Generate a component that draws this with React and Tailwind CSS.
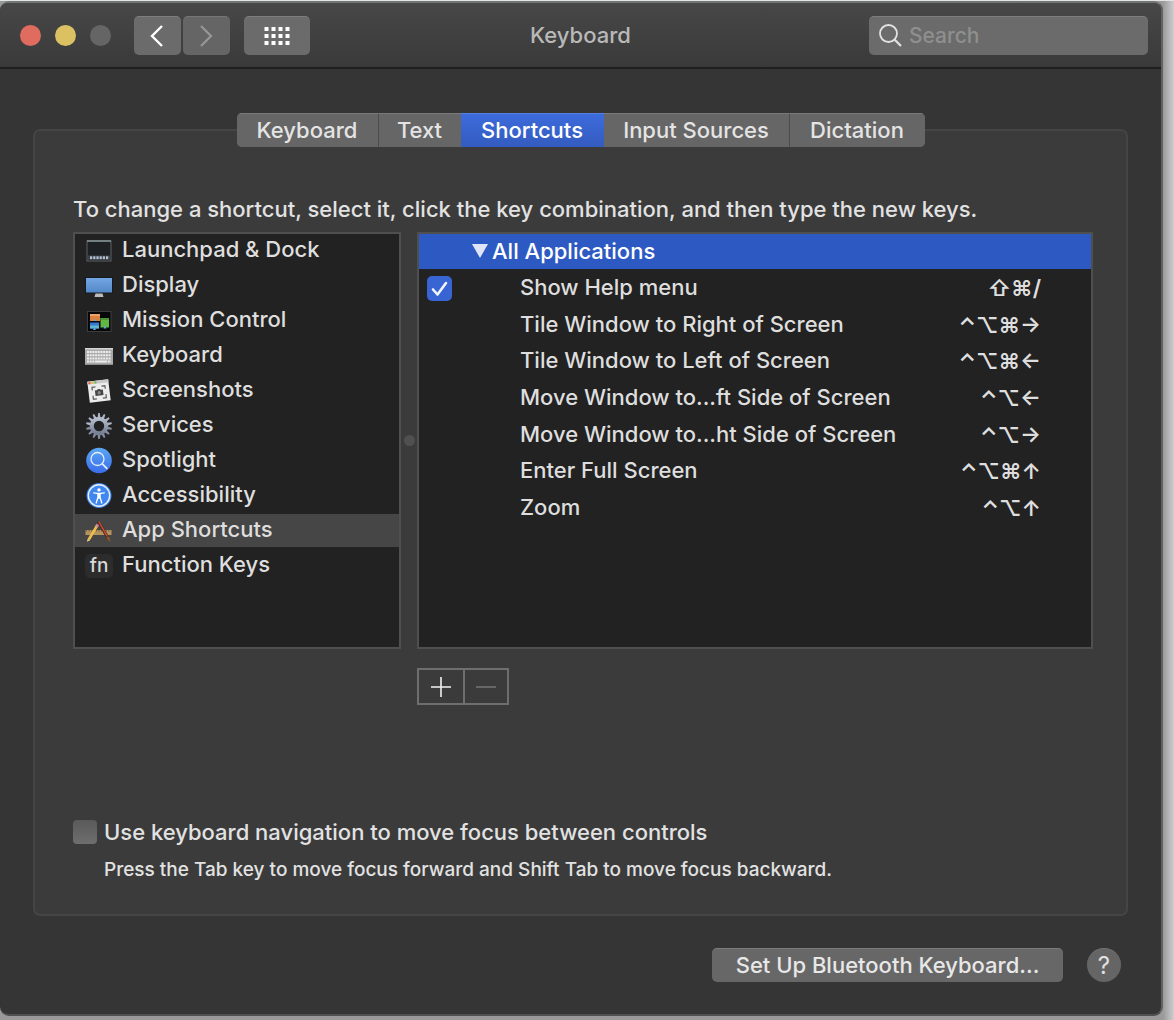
import { useState } from "react";

function LaunchpadIcon() {
  return (
    <svg width="28" height="28" viewBox="0 0 28 28" aria-hidden="true">
      <rect x="2" y="4" width="24" height="20" fill="#1d2124" stroke="#5d6265" strokeWidth="1" />
      <path d="M2 4h24" stroke="#a9bcc2" strokeWidth="1.200" />
      <rect x="3" y="18.500" width="22" height="4.500" fill="#3a4248" />
      {[5, 8.2, 11.400, 14.600, 17.800, 21].map((x) => (
        <rect key={x} x={x} y="19.300" width="2.200" height="2.800" fill="#b4bfd2" />
      ))}
    </svg>
  );
}

function DisplayIcon() {
  return (
    <svg width="28" height="28" viewBox="0 0 28 28" aria-hidden="true">
      <defs>
        <linearGradient id="display" x1="0" y1="0" x2="0" y2="1">
          <stop offset="0" stopColor="#74a7e4" />
          <stop offset="1" stopColor="#5288c8" />
        </linearGradient>
      </defs>
      <rect x="0.500" y="5.500" width="27" height="15.500" fill="url(#display)" stroke="#16191d" />
      <path d="M10.500 21.500h7l1 3.500h-9z" fill="#b9bbbd" />
    </svg>
  );
}

function MissionIcon() {
  return (
    <svg width="28" height="28" viewBox="0 0 28 28" aria-hidden="true">
      <rect x="2.500" y="4.500" width="23.500" height="20" fill="#050607" stroke="#3a3c3e" />
      <rect x="5" y="7" width="10" height="7" fill="#db8240" />
      <path d="M5 7h10v2H5z" fill="#eda36a" />
      <rect x="5" y="15.500" width="9" height="6" fill="#3479d4" />
      <path d="M5 18.500h9v3H5z" fill="#61b5ce" />
      <rect x="15.500" y="11" width="8.500" height="9.500" fill="#5fb644" />
      <path d="M15.500 11H24v2h-8.500z" fill="#4a9636" />
      <path d="M8.500 14h3l-1.500-2zM8 23h3l-1.500-3zM18.500 21.500h3l-1.500-3z" fill="#56a9ec" />
    </svg>
  );
}

function KeyboardIcon() {
  return (
    <svg width="28" height="28" viewBox="0 0 28 28" aria-hidden="true">
      <rect x="0" y="6" width="28" height="17" rx="1" fill="#a9a9a9" />
      <rect x="0" y="6" width="28" height="1.500" fill="#d4d4d4" />
      <path d="M2 10h24M2 13.200h24M2 16.400h24" stroke="#ededed" strokeWidth="2" strokeDasharray="2 0.700" />
      <path d="M2 19.600h24" stroke="#ededed" strokeWidth="2" strokeDasharray="2 0.700 2 0.700 2 0.700 12 0.700 2 0.700" />
      <path d="M0 22.500h28" stroke="#8b8b8b" />
    </svg>
  );
}

function ScreenshotIcon() {
  return (
    <svg width="28" height="28" viewBox="0 0 28 28" aria-hidden="true">
      <g transform="rotate(-7 14 14)">
        <rect x="3.500" y="3.500" width="21" height="21" fill="#ececec" />
        <rect x="3.500" y="3.500" width="21" height="3" fill="#c9c9c9" />
        <circle cx="5.500" cy="5" r="1.200" fill="#ee5c52" />
        <circle cx="8.500" cy="5" r="1.200" fill="#e5bd43" />
        <circle cx="11.500" cy="5" r="1.200" fill="#63bd52" />
        <path d="M7.500 12.500v-3h3.500M17 9.500h3.500v3M20.500 18v3.500H17M11 21.500H7.500V18" fill="none" stroke="#666" strokeWidth="1.300" />
        <path d="M10 13h2l1-1h2l1 1h2v5.500h-8z" fill="#444" />
        <circle cx="14" cy="15.700" r="1.700" fill="#888" />
      </g>
    </svg>
  );
}

function GearIcon() {
  return (
    <svg width="28" height="28" viewBox="0 0 28 28" aria-hidden="true">
      <defs>
        <linearGradient id="gear" x1="0" y1="0" x2="0" y2="1">
          <stop offset="0" stopColor="#b4bbcb" />
          <stop offset="1" stopColor="#757e94" />
        </linearGradient>
      </defs>
      {Array.from({ length: 14 }, (_, i) => (
        <path key={i} d="M12.500 6 13.200 1h1.600l.7 5z" fill={i > 3 && i < 11 ? "#858da1" : "#adb4c5"} transform={`rotate(${(i * 360) / 14} 14 14)`} />
      ))}
      <circle cx="14" cy="14" r="7.200" fill="none" stroke="url(#gear)" strokeWidth="4" />
    </svg>
  );
}

function SpotlightIcon() {
  return (
    <svg width="28" height="28" viewBox="0 0 28 28" aria-hidden="true">
      <defs>
        <linearGradient id="spot" x1="0" y1="0" x2="0" y2="1">
          <stop offset="0" stopColor="#5aa7f3" />
          <stop offset="1" stopColor="#3b6ceb" />
        </linearGradient>
      </defs>
      <circle cx="14" cy="13.500" r="12.800" fill="url(#spot)" />
      <circle cx="12.500" cy="12" r="6.500" fill="none" stroke="#e4effc" strokeWidth="1.300" />
      <path d="m17.300 16.800 4.500 4.500" stroke="#e4effc" strokeWidth="1.800" strokeLinecap="round" />
    </svg>
  );
}

function AccessibilityIcon() {
  return (
    <svg width="28" height="28" viewBox="0 0 28 28" aria-hidden="true">
      <g transform="translate(0 -0.500)">
        <circle cx="14" cy="14" r="12.500" fill="#3f83ec" />
        <circle cx="14" cy="14" r="10.700" fill="#4087ef" stroke="#e6f0fd" strokeWidth="1.400" />
        <circle cx="14" cy="8.400" r="1.700" fill="#fff" />
        <path d="M8.700 11.400 12.400 11.800h3.200l3.700-.4M12.900 12v4l-1.700 5.500M15.100 12v4l1.700 5.500M14 11.800v5" fill="none" stroke="#fff" strokeWidth="1.300" strokeLinecap="round" strokeLinejoin="round" />
      </g>
    </svg>
  );
}

function AppsIcon() {
  return (
    <svg width="28" height="28" viewBox="0 0 28 28" aria-hidden="true">
      <rect x="0.500" y="13" width="26" height="5" fill="#b3935f" />
      <path d="M1 13.800h25" stroke="#7b6340" strokeWidth="1.500" strokeDasharray="1 1.500" />
      <path d="M13.500 4.500 23.500 22" stroke="#3e2a23" strokeWidth="3" />
      <path d="M13.800 4.500 22 19" stroke="#bf4b31" strokeWidth="1.600" />
      <path d="m21.800 19 3 1.500.7 4.500-4-3.500z" fill="#8a5331" />
      <path d="M12.500 8 3.500 23" stroke="#edbd4b" strokeWidth="2.600" />
      <path d="m12.800 7.400-1.400 2.300" stroke="#d985a4" strokeWidth="2.800" />
      <path d="m2.400 22.300-.4 2.500 2.500-1.200z" fill="#e8d5b5" />
    </svg>
  );
}

function FnIcon() {
  return (
    <span aria-hidden="true" className="grid h-6 w-7 place-items-center rounded-[5px] bg-[#2c2c2c] text-[19px] leading-6 text-[#d8d8d8]">
      fn
    </span>
  );
}

const CATEGORIES = [
  ["Launchpad & Dock", LaunchpadIcon],
  ["Display", DisplayIcon],
  ["Mission Control", MissionIcon],
  ["Keyboard", KeyboardIcon],
  ["Screenshots", ScreenshotIcon],
  ["Services", GearIcon],
  ["Spotlight", SpotlightIcon],
  ["Accessibility", AccessibilityIcon],
  ["App Shortcuts", AppsIcon],
  ["Function Keys", FnIcon],
];

const SHORTCUTS = [
  ["Show Help menu", "⇧⌘/"],
  ["Tile Window to Right of Screen", "⌃⌥⌘→"],
  ["Tile Window to Left of Screen", "⌃⌥⌘←"],
  ["Move Window to...ft Side of Screen", "⌃⌥←"],
  ["Move Window to...ht Side of Screen", "⌃⌥→"],
  ["Enter Full Screen", "⌃⌥⌘↑"],
  ["Zoom", "⌃⌥↑"],
];

const TABS = ["Keyboard", "Text", "Shortcuts", "Input Sources", "Dictation"];

function TitleBar() {
  return (
    <header className="grid h-[66px] grid-cols-[1fr_auto_1fr] items-center border-b-2 border-[#1f1f1f] bg-linear-to-b from-[#474747] to-[#3a3a3a] px-[13px]">
      <div className="flex items-center pl-[7px]">
        <div className="flex gap-[14px]">
          <button aria-label="Close" className="size-[21px] rounded-full bg-[#e06c60]" />
          <button aria-label="Minimize" className="size-[21px] rounded-full bg-[#dcc162]" />
          <button aria-label="Full screen" disabled className="size-[21px] rounded-full bg-[#656565]" />
        </div>
        <div className="ml-[23px] flex gap-[2px]">
          <button aria-label="Back" className="grid h-[39px] w-[47px] place-items-center rounded-[5px] border-t border-[#7e7e7e] bg-[#6b6b6b]">
            <svg width="16" height="24" viewBox="0 0 16 24" fill="none" stroke="#fff" strokeWidth="2.400">
              <path d="M12 2 2 12l10 10" />
            </svg>
          </button>
          <button aria-label="Forward" disabled className="grid h-[39px] w-[47px] place-items-center rounded-[5px] border-t border-[#757575] bg-[#656565]">
            <svg width="16" height="24" viewBox="0 0 16 24" fill="none" stroke="#979797" strokeWidth="2.200">
              <path d="M2 2 12 12 2 22" />
            </svg>
          </button>
        </div>
        <button aria-label="Show all" className="ml-[14px] grid h-[39px] w-[66px] place-items-center rounded-[5px] border-t border-[#7e7e7e] bg-[#6b6b6b]">
          <svg width="26" height="20" viewBox="0 0 26 20" fill="#fff">
            {[0, 1, 2].map((r) => [0, 1, 2, 3].map((c) => <rect key={`${r}${c}`} x={c * 7 + 0.500} y={r * 7 + 1} width="4" height="4" />))}
          </svg>
        </button>
      </div>
      <h1 className="text-[22px] leading-7 font-medium text-[#b9b9b9]">Keyboard</h1>
      <label className="flex h-[39px] w-[279px] items-center gap-[7px] justify-self-end rounded-[5px] border-t border-[#7e7e7e] bg-[#6b6b6b] pl-[10px]">
        <svg className="shrink-0" width="23" height="23" viewBox="0 0 23 23" fill="none" stroke="#e2e2e2" strokeWidth="1.800" aria-hidden="true">
          <circle cx="9.500" cy="9.500" r="8.500" />
          <path d="m15.500 15.500 6.500 6.500" strokeWidth="2.200" />
        </svg>
        <input type="search" aria-label="Search" placeholder="Search" className="w-full min-w-0 bg-transparent text-[21px] leading-7 text-white outline-none placeholder:text-[#8f8f8f]" />
      </label>
    </header>
  );
}

function Tabs({ tab, setTab }) {
  return (
    <div role="tablist" className="relative mx-auto -mb-[18px] grid h-[34px] w-[688px] grid-cols-[142fr_82fr_143fr_186fr_135fr] overflow-hidden rounded-[5px] bg-[#666]">
      {TABS.map((t, i) => (
        <button
          key={t}
          role="tab"
          aria-selected={t === tab}
          onClick={() => setTab(t)}
          className={`border-t pb-px text-[22px] leading-7 ${
            t === tab ? "border-[#557fe0] bg-linear-to-b from-[#3c6bdb] to-[#345cc0] text-white" : "border-[#7a7a7a] bg-[#666] text-[#e4e4e4]"
          } ${i === 0 || i === 3 ? "border-r border-r-[#4c4c4c]" : ""}`}
        >
          {t}
        </button>
      ))}
    </div>
  );
}

function CategoryList({ selected, onSelect }) {
  return (
    <ul className="flex w-[328px] shrink-0 flex-col gap-[2px] border-2 border-[#4f4f4f] bg-[#222]">
      {CATEGORIES.map(([name, Icon]) => (
        <li key={name}>
          <button
            onClick={() => onSelect(name)}
            className={`flex h-[33px] w-full items-center gap-[9px] pl-[10px] text-left text-[22px] leading-7 text-[#dedede] ${name === selected ? "bg-[#464646]" : ""}`}
          >
            <Icon />
            <span className="pb-[3px]">{name}</span>
          </button>
        </li>
      ))}
    </ul>
  );
}

function ShortcutTable() {
  const [on, setOn] = useState(true);
  return (
    <div className="grow border-2 border-[#4f4f4f] bg-[#222]">
      <button aria-expanded="true" className="flex h-[35px] w-full items-center gap-1 bg-[#2d59c3] pb-[2px] pl-[53px] text-[22px] leading-7 text-white">
        <svg width="16" height="14" viewBox="0 0 16 14" fill="#dfe5f6" aria-hidden="true">
          <path d="M0 0h16L8 14z" />
        </svg>
        All Applications
      </button>
      <table className="h-[256px] w-full text-[22px] leading-7 text-[#dedede]">
        <tbody>
          {SHORTCUTS.map(([name, keys], i) => (
            <tr key={name}>
              <td className="w-[101px] p-0 pl-2">
                {i === 0 && (
                  <span className="grid w-[25px] pt-[3px]">
                    <input type="checkbox" aria-label={name} checked={on} onChange={() => setOn(!on)} className="col-start-1 row-start-1 size-[25px] appearance-none rounded-[5px] bg-[#5f5f5f] checked:bg-[#3865d3]" />
                    {on && (
                      <svg className="pointer-events-none col-start-1 row-start-1" width="25" height="25" viewBox="0 0 25 25" fill="none" stroke="#f1f4fc" strokeWidth="2.600" strokeLinecap="round" strokeLinejoin="round" aria-hidden="true">
                        <path d="m6 13.500 4.500 5 8.500-11.500" />
                      </svg>
                    )}
                  </span>
                )}
              </td>
              <td className="p-0">{name}</td>
              <td className="p-0 pt-[2px] pr-[50px] text-right font-semibold">{keys}</td>
            </tr>
          ))}
        </tbody>
      </table>
    </div>
  );
}

export default function App() {
  const [tab, setTab] = useState("Shortcuts");
  const [category, setCategory] = useState("App Shortcuts");
  const [nav, setNav] = useState(false);
  return (
    <div className="min-h-screen bg-linear-to-b from-[#e3e6e4] to-[#777] pt-px font-['Inter',sans-serif] font-medium">
      <div className="bg-linear-to-l from-[#cfcfcf] to-[#9a9a9a] to-[11px] pr-[11px] pb-1">
        <main className="overflow-hidden rounded-[9px] border-t-2 border-r-2 border-b-2 border-t-[#717572] border-r-[#626262] border-b-[#505050] bg-[#353535] pb-8">
          <TitleBar />
          <div className="px-[33px] pt-11">
            <Tabs tab={tab} setTab={setTab} />
            <section className="rounded-[7px] border-2 border-[#454545] bg-[#3b3b3b] pt-[64px] pr-[33px] pb-8 pl-[38px]">
              <p className="text-[22px] leading-7 text-[#e2e2e2]">To change a shortcut, select it, click the key combination, and then type the new keys.</p>
              <div className="mt-[9px] flex h-[417px]">
                <CategoryList selected={category} onSelect={setCategory} />
                <div className="grid w-4 shrink-0 place-items-center">
                  <span className="size-[11px] rounded-full bg-[#505050]" />
                </div>
                <ShortcutTable />
              </div>
              <div className="mt-[19px] ml-[344px] flex h-[37px] w-[92px] border-2 border-[#6e6e6e]">
                <button aria-label="Add shortcut" className="grid w-[46px] place-items-center border-r-2 border-[#6e6e6e]">
                  <svg width="20" height="20" viewBox="0 0 20 20" stroke="#f2f2f2" strokeWidth="1.600">
                    <path d="M10 0v20M0 10h20" />
                  </svg>
                </button>
                <button aria-label="Remove shortcut" disabled className="grid grow place-items-center">
                  <svg width="20" height="20" viewBox="0 0 20 20" stroke="#666" strokeWidth="2">
                    <path d="M0 10h20" />
                  </svg>
                </button>
              </div>
              <label className="mt-[113px] flex items-center gap-[7px] text-[22px] leading-7 text-[#e2e2e2]">
                <input type="checkbox" checked={nav} onChange={() => setNav(!nav)} className="size-6 appearance-none rounded-[4px] bg-linear-to-b from-[#5a5a5a] to-[#6e6e6e] checked:from-[#3c6bdb] checked:to-[#345cc0]" />
                Use keyboard navigation to move focus between controls
              </label>
              <p className="mt-3 ml-[31px] text-[19px] leading-6 text-[#e2e2e2]">Press the Tab key to move focus forward and Shift Tab to move focus backward.</p>
            </section>
            <footer className="mt-8 flex items-center justify-end gap-6 pr-[7px]">
              <button className="h-[34px] w-[351px] rounded-[5px] border-t border-[#7c7c7c] bg-[#676767] pb-px text-[22px] leading-7 text-[#e8e8e8]">Set Up Bluetooth Keyboard...</button>
              <button aria-label="Help" className="size-[34px] rounded-full border-t border-[#757575] bg-[#656565] text-[24px] leading-7 font-normal text-[#e0e0e0]">
                ?
              </button>
            </footer>
          </div>
        </main>
      </div>
    </div>
  );
}
